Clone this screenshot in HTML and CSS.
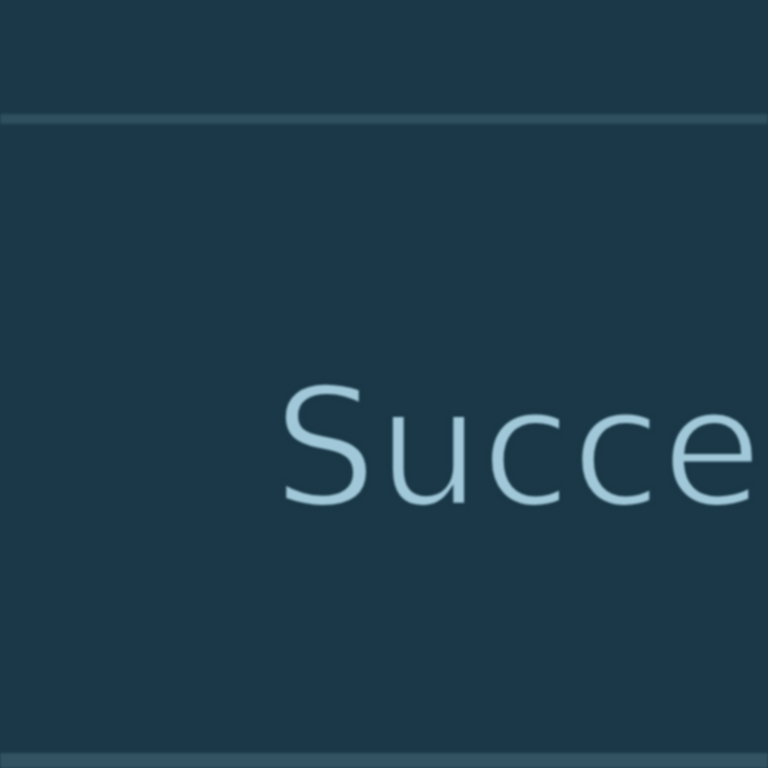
FILE: index.html
```html
<!DOCTYPE html>
<html lang="en">
<head>
<meta charset="utf-8">
<title>Success</title>
<link rel="stylesheet" href="styles.css">
</head>
<body>
<div class="page">
  <div class="top"></div>
  <div class="rule"></div>
  <main class="main">
    <h1 class="title">Successful</h1>
  </main>
  <div class="bottom"></div>
</div>
</body>
</html>
```
FILE: styles.css
```css
html, body {
  margin: 0;
  padding: 0;
  background: #1a3847;
}
.page {
  width: 768px;
  height: 768px;
  display: flex;
  flex-direction: column;
  overflow: hidden;
  background: #1a3847;
}
.top {
  height: 114px;
  flex: none;
}
.rule {
  height: 10px;
  flex: none;
  background: #2f505e;
  filter: blur(1.5px);
}
.main {
  flex: 1;
  padding-top: 243px;
  padding-left: 273px;
  overflow: hidden;
}
.title {
  margin: 0;
  font-family: "DejaVu Sans", sans-serif;
  font-weight: 400;
  font-size: 164px;
  line-height: 1;
  color: #a0c8d8;
  -webkit-text-stroke: 4px #1a3847;
  white-space: nowrap;
  filter: blur(1px);
}
.bottom {
  height: 15px;
  flex: none;
  background: #335363;
  filter: blur(1.5px);
}
```
